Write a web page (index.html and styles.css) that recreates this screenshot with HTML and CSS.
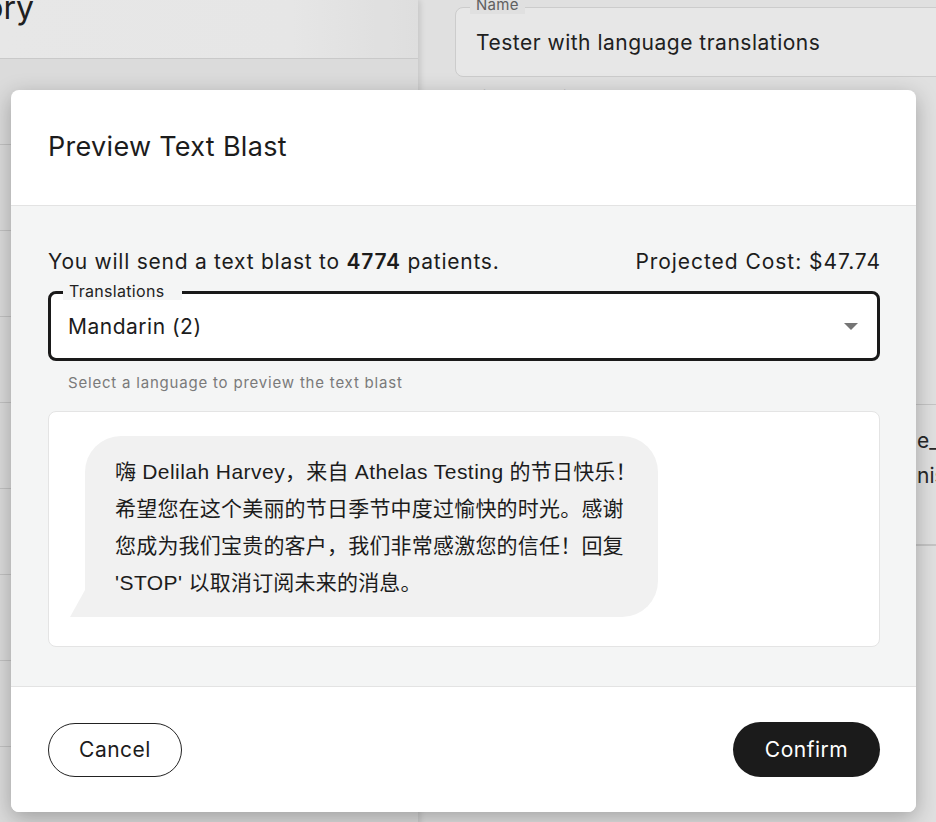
FILE: index.html
```html
<!DOCTYPE html>
<html lang="en">
<head>
<meta charset="utf-8">
<title>Preview Text Blast</title>
<link rel="stylesheet" href="styles.css">
</head>
<body>
<div class="page">
  <section class="left">
    <div class="left-head"><h1 class="left-title">History</h1></div>
    <div class="left-row"></div>
    <div class="left-row"></div>
    <div class="left-row"></div>
    <div class="left-row"></div>
    <div class="left-row"></div>
    <div class="left-row"></div>
    <div class="left-row"></div>
    <div class="left-row"></div>
    <div class="left-row"></div>
  </section>
  <section class="right">
    <div class="ghost-field">
      <span class="ghost-label">Name</span>
      <div class="ghost-value">Tester with language translations</div>
    </div>
    <div class="ghost-filter">Filter by Patients</div>
    <div class="ghost-table">
      <div class="ghost-row ghost-row-a"></div>
      <div class="ghost-row ghost-row-b">
        <span class="ghost-cell">e_template</span>
        <span class="ghost-cell">nis</span>
      </div>
      <div class="ghost-row"></div>
    </div>
  </section>
  <div class="overlay"></div>

  <div class="modal" role="dialog">
    <header class="modal-head">
      <h2 class="modal-title">Preview Text Blast</h2>
    </header>
    <div class="modal-body">
      <div class="summary">
        <span>You will send a text blast to <strong>4774</strong> patients.</span>
        <span class="cost">Projected Cost: $47.74</span>
      </div>
      <div class="select">
        <span class="select-label">Translations</span>
        <span class="select-value">Mandarin (2)</span>
        <span class="select-caret"></span>
      </div>
      <div class="helper">Select a language to preview the text blast</div>
      <div class="preview">
        <div class="bubble">嗨 <span class="en">Delilah Harvey</span>，来自 <span class="en">Athelas Testing</span> 的节日快乐！希望您在这个美丽的节日季节中度过愉快的时光。感谢您成为我们宝贵的客户，我们非常感激您的信任！回复 <span class="en">'STOP'</span> 以取消订阅未来的消息。</div>
      </div>
    </div>
    <footer class="modal-foot">
      <button class="btn btn-outline">Cancel</button>
      <button class="btn btn-solid">Confirm</button>
    </footer>
  </div>
</div>
</body>
</html>
```

FILE: styles.css
```css
* { box-sizing: border-box; }
html, body { margin: 0; padding: 0; }
body {
  font-family: Inter, "Noto Sans", sans-serif;
  color: #1c1c1c;
  background: #e4e4e4;
}
.page {
  position: relative;
  width: 936px;
  height: 822px;
  overflow: hidden;
  display: grid;
  grid-template-columns: 418px 1fr;
}

/* background page */
.left {
  background: #e9e9e9;
  box-shadow: 2px 0 6px rgba(0,0,0,0.12);
  position: relative;
  z-index: 1;
}
.left-head {
  height: 59px;
  background: linear-gradient(90deg, #f6f6f6 0%, #f5f5f5 70%, #ececec 100%);
  border-bottom: 1px solid #d6d6d6;
  overflow: hidden;
}
.left-title {
  margin: -12px 0 0 0;
  width: 34px;
  overflow: hidden;
  white-space: nowrap;
  direction: rtl;
  font-size: 32px;
  font-weight: 400;
  line-height: 40px;
  color: #222;
}
.left-row {
  height: 86px;
  border-bottom: 1px solid #cfcfcf;
}
.right {
  background: #eeeeee;
  padding-left: 37px;
  overflow: hidden;
}
.ghost-field {
  position: relative;
  margin-top: 7px;
  width: 620px;
  height: 70px;
  border: 1px solid #d9d9d9;
  border-radius: 8px;
  background: #f6f6f6;
  padding-left: 20px;
  display: flex;
  align-items: center;
}
.ghost-label {
  position: absolute;
  top: -12px;
  left: 14px;
  padding: 0 6px;
  background: #eeeeee;
  font-size: 15px;
  letter-spacing: 0.3px;
  line-height: 18px;
  color: #666;
}
.ghost-value {
  font-size: 21px;
  letter-spacing: 0.5px;
  color: #222;
}
.ghost-filter {
  margin-top: 9px;
  padding-left: 18px;
  font-size: 16px;
  color: #666;
}
.ghost-row {
  border-bottom: 1px solid #d2d2d2;
}
.ghost-row-a { height: 299px; }
.ghost-row-b {
  height: 140px;
  padding: 23px 0 0 462px;
  display: flex;
  flex-direction: column;
  gap: 9px;
}
.ghost-cell {
  font-size: 21px;
  line-height: 26px;
  color: #2a2a2a;
  white-space: nowrap;
}
.overlay {
  position: absolute;
  inset: 0;
  background: rgba(0,0,0,0.06);
  z-index: 2;
}

/* modal */
.modal {
  position: absolute;
  left: 11px;
  top: 90px;
  width: 905px;
  height: 722px;
  z-index: 3;
  display: flex;
  flex-direction: column;
  background: #fff;
  border-radius: 8px;
  overflow: hidden;
  box-shadow: 0 6px 22px rgba(0,0,0,0.28);
}
.modal-head {
  height: 116px;
  flex: none;
  display: flex;
  align-items: center;
  padding: 0 37px 2px;
  border-bottom: 1px solid #e3e3e3;
}
.modal-title {
  margin: 0;
  font-size: 27px;
  font-weight: 400;
  letter-spacing: 0.3px;
  color: #1c1c1c;
}
.modal-body {
  flex: 1;
  background: #f4f5f5;
  padding: 42px 36px 0 37px;
}
.summary {
  display: flex;
  justify-content: space-between;
  font-size: 21px;
  letter-spacing: 0.75px;
  line-height: 28px;
}
.summary .cost { letter-spacing: 0.95px; margin-right: -1px; }
.summary strong { font-weight: 600; }
.select {
  position: relative;
  margin-top: 15px;
  height: 70px;
  border: 3px solid #1a1a1a;
  border-radius: 8px;
  background: #fff;
  display: flex;
  align-items: center;
  padding: 0 19px 0 17px;
}
.select-label {
  position: absolute;
  top: -12px;
  left: 12px;
  padding: 0 18px 0 6px;
  background: #f4f5f5;
  font-size: 16px;
  letter-spacing: 0.3px;
  line-height: 18px;
  color: #222;
}
.select-value {
  flex: 1;
  font-size: 21px;
  letter-spacing: 0.5px;
  color: #1c1c1c;
}
.select-caret {
  width: 0;
  height: 0;
  border-left: 7px solid transparent;
  border-right: 7px solid transparent;
  border-top: 7px solid #757575;
}
.helper {
  margin-top: 12px;
  padding-left: 20px;
  font-size: 15px;
  letter-spacing: 0.8px;
  line-height: 20px;
  color: #7a7a7a;
}
.preview {
  margin-top: 18px;
  height: 236px;
  background: #fff;
  border: 1px solid #e4e4e4;
  border-radius: 8px;
  padding: 24px 0 0 36px;
}
.bubble {
  position: relative;
  width: 573px;
  padding: 17px 20px 16px 30px;
  background: #f1f1f1;
  border-radius: 36px 36px 36px 0;
  font-family: "Liberation Sans", "Noto Sans CJK SC", sans-serif;
  font-size: 21px;
  letter-spacing: 0.2px;
  line-height: 37px;
  color: #1c1c1c;
}
.bubble .en { letter-spacing: 0.45px; }
.bubble::before {
  content: "";
  position: absolute;
  left: -15px;
  bottom: 0;
  width: 30px;
  height: 27px;
  background: #f1f1f1;
  clip-path: polygon(50% 0, 0 100%, 100% 100%);
}
.modal-foot {
  height: 126px;
  flex: none;
  display: flex;
  justify-content: space-between;
  align-items: center;
  padding: 0 36px 0 37px;
  border-top: 1px solid #e3e3e3;
  background: #fff;
}
.btn {
  font-family: Inter, "Noto Sans", sans-serif;
  font-size: 21px;
  letter-spacing: 0.5px;
  border-radius: 28px;
  cursor: pointer;
}
.btn-outline {
  width: 134px;
  height: 54px;
  background: #fff;
  border: 1px solid #222;
  color: #1c1c1c;
}
.btn-solid {
  width: 147px;
  height: 55px;
  background: #1b1b1b;
  border: none;
  color: #fff;
}
```
